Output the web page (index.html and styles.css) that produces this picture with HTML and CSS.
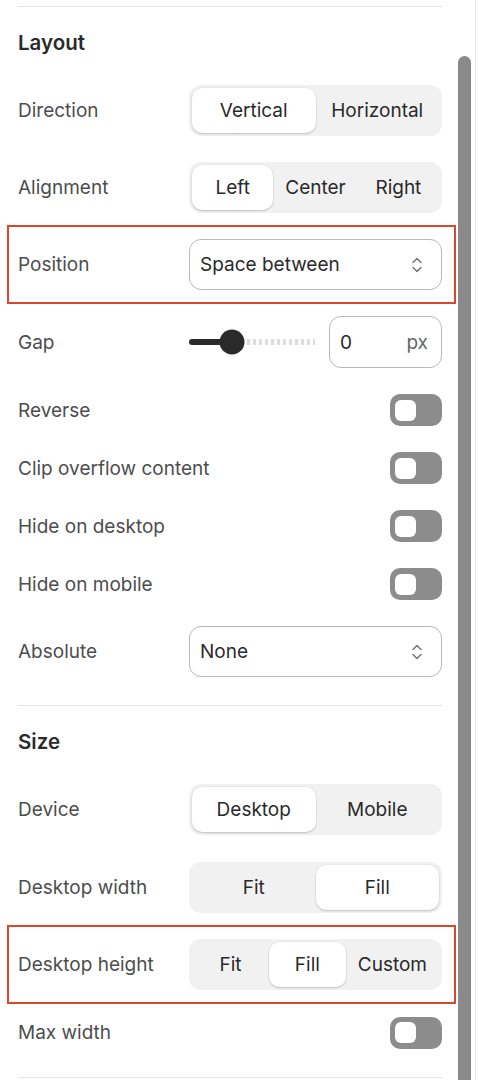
FILE: index.html
```html
<!DOCTYPE html>
<html lang="en">
<head>
<meta charset="utf-8">
<title>Layout settings</title>
<link rel="stylesheet" href="styles.css">
</head>
<body>
<div class="page">
  <div class="panel">
    <div class="divider"></div>
    <section class="section">
      <h2 class="section-title">Layout</h2>
      <div class="rows">
        <div class="row">
          <span class="label">Direction</span>
          <div class="seg">
            <button class="seg-item active">Vertical</button>
            <button class="seg-item">Horizontal</button>
          </div>
        </div>
        <div class="row">
          <span class="label">Alignment</span>
          <div class="seg">
            <button class="seg-item active">Left</button>
            <button class="seg-item">Center</button>
            <button class="seg-item">Right</button>
          </div>
        </div>
        <div class="row highlight">
          <span class="label">Position</span>
          <div class="select">
            <span>Space between</span>
            <svg class="chev" width="12" height="18" viewBox="0 0 12 18"><path d="M2 6.5 L6 2.5 L10 6.5" fill="none" stroke="#7a7a7a" stroke-width="1.6" stroke-linecap="round" stroke-linejoin="round"/><path d="M2 11.5 L6 15.5 L10 11.5" fill="none" stroke="#7a7a7a" stroke-width="1.6" stroke-linecap="round" stroke-linejoin="round"/></svg>
          </div>
        </div>
        <div class="row row-gap">
          <span class="label">Gap</span>
          <div class="gap-ctrl">
            <svg class="slider" width="128" height="28" viewBox="0 0 128 28">
              <line x1="58" y1="14" x2="126" y2="14" stroke="#dcdcdc" stroke-width="6" stroke-dasharray="3 3"/>
              <line x1="3" y1="14" x2="43" y2="14" stroke="#2a2a2a" stroke-width="6" stroke-linecap="round"/>
              <circle cx="43" cy="14" r="12.5" fill="#2a2a2a"/>
            </svg>
            <div class="num-input">
              <span class="num">0</span>
              <span class="unit">px</span>
            </div>
          </div>
        </div>
        <div class="row row-toggle">
          <span class="label">Reverse</span>
          <span class="toggle"><span class="knob"></span></span>
        </div>
        <div class="row row-toggle">
          <span class="label">Clip overflow content</span>
          <span class="toggle"><span class="knob"></span></span>
        </div>
        <div class="row row-toggle">
          <span class="label">Hide on desktop</span>
          <span class="toggle"><span class="knob"></span></span>
        </div>
        <div class="row row-toggle">
          <span class="label">Hide on mobile</span>
          <span class="toggle"><span class="knob"></span></span>
        </div>
        <div class="row">
          <span class="label">Absolute</span>
          <div class="select">
            <span>None</span>
            <svg class="chev" width="12" height="18" viewBox="0 0 12 18"><path d="M2 6.5 L6 2.5 L10 6.5" fill="none" stroke="#7a7a7a" stroke-width="1.6" stroke-linecap="round" stroke-linejoin="round"/><path d="M2 11.5 L6 15.5 L10 11.5" fill="none" stroke="#7a7a7a" stroke-width="1.6" stroke-linecap="round" stroke-linejoin="round"/></svg>
          </div>
        </div>
      </div>
    </section>
    <div class="divider"></div>
    <section class="section section-size">
      <h2 class="section-title">Size</h2>
      <div class="rows">
        <div class="row">
          <span class="label">Device</span>
          <div class="seg">
            <button class="seg-item active">Desktop</button>
            <button class="seg-item">Mobile</button>
          </div>
        </div>
        <div class="row">
          <span class="label">Desktop width</span>
          <div class="seg">
            <button class="seg-item">Fit</button>
            <button class="seg-item active">Fill</button>
          </div>
        </div>
        <div class="row highlight">
          <span class="label">Desktop height</span>
          <div class="seg">
            <button class="seg-item">Fit</button>
            <button class="seg-item active">Fill</button>
            <button class="seg-item">Custom</button>
          </div>
        </div>
        <div class="row row-toggle">
          <span class="label">Max width</span>
          <span class="toggle"><span class="knob"></span></span>
        </div>
      </div>
    </section>
    <div class="divider"></div>
  </div>
  <div class="track"><div class="thumb"></div></div>
</div>
</body>
</html>
```

FILE: styles.css
```css
* { box-sizing: border-box; }
html, body {
  margin: 0;
  padding: 0;
  background: #ffffff;
  height: 1080px;
  overflow: hidden;
}
body {
  font-family: Inter, "Noto Sans", "Liberation Sans", sans-serif;
  color: #2a2a2a;
}
.page {
  display: flex;
  height: 1080px;
}
.panel {
  width: 458px;
  flex: none;
  padding: 6px 16px 0 18px;
}
.divider {
  height: 1px;
  background: #e4e4e4;
}
.section {
  padding: 24px 0 28px;
}
.section-size .rows { gap: 26.5px; }
.section-title {
  margin: 0 0 30px;
  font-size: 20.5px;
  line-height: 24px;
  font-weight: 600;
  color: #2a2a2a;
}
.rows {
  display: flex;
  flex-direction: column;
  gap: 26px;
}
.row {
  display: flex;
  align-items: center;
  justify-content: space-between;
  height: 51px;
}
.row-gap { height: 52px; }
.row-toggle { height: 32px; }
.row.highlight {
  height: 79px;
  margin: -14px -14px -14px -11px;
  padding: 12px 12px 12px 9px;
  border: 2px solid #d9482b;
}
.label {
  font-size: 19px;
  color: #4d4d4d;
}
.seg {
  width: 253px;
  height: 51px;
  display: flex;
  padding: 3px;
  background: #f1f1f1;
  border-radius: 12px;
}
.seg-item {
  flex: 1 1 0;
  border: 0;
  background: transparent;
  font-family: inherit;
  font-size: 19px;
  color: #2a2a2a;
  padding: 0 12px;
  border-radius: 10px;
  white-space: nowrap;
}
.seg-item.active {
  background: #ffffff;
  box-shadow: 0 1px 2px rgba(0, 0, 0, 0.18), 0 0 0 0.5px rgba(0, 0, 0, 0.06);
}
.select {
  width: 253px;
  height: 51px;
  display: flex;
  align-items: center;
  justify-content: space-between;
  padding: 0 18px 0 10px;
  border: 1px solid #b9b9b9;
  border-radius: 12px;
  font-size: 19px;
  color: #2a2a2a;
}
.chev { display: block; }
.gap-ctrl {
  width: 253px;
  display: flex;
  align-items: center;
  justify-content: space-between;
}
.slider { display: block; }
.num-input {
  width: 113px;
  height: 52px;
  display: flex;
  align-items: center;
  justify-content: space-between;
  padding: 0 13px 0 10px;
  border: 1px solid #b9b9b9;
  border-radius: 12px;
  font-size: 19px;
}
.unit { color: #666666; }
.toggle {
  width: 52px;
  height: 32px;
  background: #8c8c8c;
  border-radius: 10px;
  display: flex;
  align-items: center;
  padding-left: 5px;
}
.knob {
  width: 21px;
  height: 21px;
  background: #ffffff;
  border-radius: 6px;
}
.track {
  width: 18px;
  flex: none;
  padding-top: 56px;
  border-right: 1px solid #e9e9e9;
}
.thumb {
  width: 13px;
  height: 1100px;
  background: #8a8a8a;
  border-radius: 7px 7px 0 0;
}
```
